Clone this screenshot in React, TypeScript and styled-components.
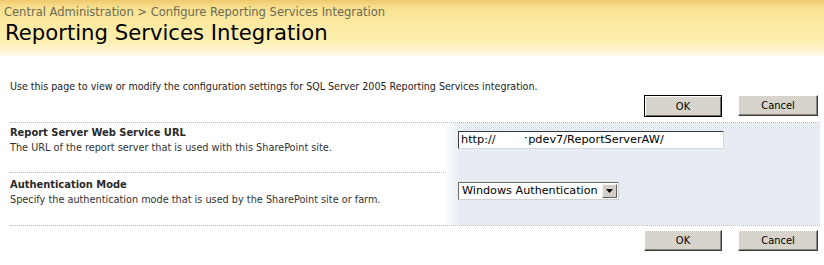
import React, { FC } from 'react'
import styled, { createGlobalStyle } from 'styled-components'

const GlobalStyle = createGlobalStyle`
    html, body {
        margin: 0;
        padding: 0;
        background: #fff;
    }
    body {
        font-family: "DejaVu Sans Condensed", "DejaVu Sans", sans-serif;
        width: 824px;
        height: 265px;
        overflow: hidden;
    }
`

const Page = styled.div`
    width: 824px;
    height: 265px;
    display: flex;
    flex-direction: column;
`

const Header = styled.div`
    height: 58px;
    padding: 5px 0 0 4px;
    box-sizing: border-box;
    background: linear-gradient(to bottom, #efc86c 0px, #f8df8e 7px, #fbe89c 18px, #fcefb0 42px, #fef8dc 53px, #ffffff 58px);
`

const Breadcrumb = styled.div`
    font-family: "DejaVu Sans", sans-serif;
    font-size: 11.5px;
    color: #6b6a55;
    line-height: 14px;
`

const Title = styled.h1`
    margin: 1px 0 0 1px;
    font-family: "DejaVu Sans", sans-serif;
    font-weight: normal;
    font-size: 21.2px;
    line-height: 26px;
    color: #000;
`

const Description = styled.p`
    margin: 21px 0 0 10px;
    font-size: 10.6px;
    color: #222;
    line-height: 14px;
`

const ButtonRow = styled.div<{ top: number }>`
    display: flex;
    justify-content: flex-end;
    gap: 16px;
    padding-right: 6px;
    margin-top: ${props => props.top}px;
`

const Button = styled.button<{ primary?: boolean; w: number }>`
    width: ${props => props.w}px;
    height: ${props => (props.primary ? 22 : 21)}px;
    box-sizing: border-box;
    font-family: "DejaVu Sans Condensed", "DejaVu Sans", sans-serif;
    font-size: 11px;
    color: #000;
    padding: 0;
    background-color: #d6d3cb;
    background-image: repeating-conic-gradient(#cfcbc2 0% 25%, #dfdcd5 0% 50%);
    background-size: 2px 2px;
    border: 1px solid;
    border-color: ${props => (props.primary ? '#000' : '#ffffff #3c3b38 #3c3b38 #ffffff')};
    box-shadow: ${props =>
        props.primary ? 'inset 1px 1px 0 #fff, inset -1px -1px 0 #6f6d68' : 'inset -1px -1px 0 #8a8780'};
    cursor: pointer;
`

const Form = styled.div`
    margin: 5px 4px 0 10px;
    border-top: 1px dotted #b9b9b9;
    border-bottom: 1px dotted #b9b9b9;
`

const Section = styled.div<{ h: number }>`
    display: grid;
    grid-template-columns: 436px 1fr;
    height: ${props => props.h}px;
`

const Label = styled.div<{ pad: number; divider?: boolean }>`
    padding-top: ${props => props.pad}px;
    border-bottom: ${props => (props.divider ? '1px dotted #b9b9b9' : 'none')};
`

const LabelTitle = styled.div`
    font-weight: bold;
    font-size: 11px;
    color: #2a2a2a;
    line-height: 15px;
`

const LabelText = styled.div`
    font-size: 10.8px;
    color: #333;
    line-height: 15px;
`

const Field = styled.div<{ pad: number }>`
    padding: ${props => props.pad}px 0 0 12px;
    background-color: #e8eef5;
    background-image:
        linear-gradient(to right, rgba(255, 255, 255, 0.95), rgba(255, 255, 255, 0) 14px),
        repeating-conic-gradient(#dfe6ef 0% 25%, #eef2f7 0% 50%);
    background-size: 100% 100%, 2px 2px;
`

const TextBox = styled.input`
    width: 266px;
    height: 18px;
    box-sizing: border-box;
    padding: 0 2px;
    font-family: "DejaVu Sans", sans-serif;
    font-size: 11.3px;
    color: #000;
    background: #fff;
    border: 1px solid;
    border-color: #3a3a3a #d8d8d8 #d8d8d8 #3a3a3a;
    outline: none;
`

const Select = styled.div`
    display: inline-flex;
    align-items: center;
    height: 18px;
    box-sizing: border-box;
    border: 1px solid;
    border-color: #6a6a6a #d0d0d0 #d0d0d0 #6a6a6a;
    background: #fff;
    padding: 0 1px 0 3px;
    font-family: "DejaVu Sans", sans-serif;
    font-size: 11.2px;
    color: #000;
    gap: 4px;
`

const Arrow = styled.span`
    width: 15px;
    height: 14px;
    box-sizing: border-box;
    display: flex;
    align-items: center;
    justify-content: center;
    background: #d4d0c8;
    border: 1px solid;
    border-color: #f4f4f4 #606060 #606060 #f4f4f4;
`

const App: FC = () => {
    return (
        <Page>
            <GlobalStyle />
            <Header>
                <Breadcrumb>Central Administration &gt; Configure Reporting Services Integration</Breadcrumb>
                <Title>Reporting Services Integration</Title>
            </Header>
            <Description>
                Use this page to view or modify the configuration settings for SQL Server 2005 Reporting Services integration.
            </Description>
            <ButtonRow top={2}>
                <Button primary w={78}>OK</Button>
                <Button w={80}>Cancel</Button>
            </ButtonRow>
            <Form>
                <Section h={50}>
                    <Label pad={2} divider>
                        <LabelTitle>Report Server Web Service URL</LabelTitle>
                        <LabelText>The URL of the report server that is used with this SharePoint site.</LabelText>
                    </Label>
                    <Field pad={5}>
                        <TextBox readOnly value={'http://        \u02d1pdev7/ReportServerAW/'} />
                    </Field>
                </Section>
                <Section h={52}>
                    <Label pad={4}>
                        <LabelTitle>Authentication Mode</LabelTitle>
                        <LabelText>Specify the authentication mode that is used by the SharePoint site or farm.</LabelText>
                    </Label>
                    <Field pad={6}>
                        <Select>
                            Windows Authentication
                            <Arrow>
                                <svg width="7" height="4" viewBox="0 0 7 4">
                                    <path d="M0 0H7L3.5 4Z" fill="#000" />
                                </svg>
                            </Arrow>
                        </Select>
                    </Field>
                </Section>
            </Form>
            <ButtonRow top={4}>
                <Button w={78}>OK</Button>
                <Button w={80}>Cancel</Button>
            </ButtonRow>
        </Page>
    )
}

export default App
